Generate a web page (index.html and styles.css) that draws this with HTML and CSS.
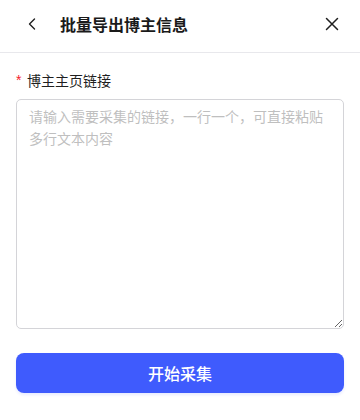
FILE: index.html
```html
<!DOCTYPE html>
<html lang="zh-CN">
<head>
<meta charset="utf-8">
<title>批量导出博主信息</title>
<link rel="stylesheet" href="styles.css">
</head>
<body>
<div class="panel">
  <header class="header">
    <button class="icon-btn back" aria-label="返回">
      <svg width="16" height="16" viewBox="0 0 16 16"><path d="M10.5 3 L5.5 8 L10.5 13" fill="none" stroke="#1f1f1f" stroke-width="1.4" stroke-linecap="round" stroke-linejoin="round"/></svg>
    </button>
    <h1 class="title">批量导出博主信息</h1>
    <button class="icon-btn close" aria-label="关闭">
      <svg width="16" height="16" viewBox="0 0 16 16"><path d="M2.5 2.5 L13.5 13.5 M13.5 2.5 L2.5 13.5" fill="none" stroke="#1f1f1f" stroke-width="1.5" stroke-linecap="round"/></svg>
    </button>
  </header>
  <main class="body">
    <label class="label" for="links"><span class="req">*</span>博主主页链接</label>
    <textarea id="links" class="input" placeholder="请输入需要采集的链接，一行一个，可直接粘贴多行文本内容"></textarea>
    <button class="primary">开始采集</button>
  </main>
</div>
</body>
</html>
```
FILE: styles.css
```css
* { box-sizing: border-box; }
html, body { margin: 0; padding: 0; background: #fff; }
body {
  font-family: "Noto Sans CJK SC", "Noto Sans", sans-serif;
  color: #1f1f1f;
  width: 360px;
  height: 420px;
}
.panel { width: 360px; }
.header {
  height: 53px;
  display: flex;
  align-items: center;
  padding: 0 16px 4px 22px;
  border-bottom: 1px solid #e8e8ec;
}
.icon-btn {
  border: 0;
  background: none;
  padding: 0;
  width: 20px;
  height: 20px;
  display: flex;
  align-items: center;
  justify-content: center;
  cursor: pointer;
}
.back { margin-right: 18px; }
.close { margin-left: auto; margin-right: 2px; }
.title {
  margin: 0;
  font-size: 16px;
  font-weight: 700;
  line-height: 24px;
  color: #1a1a1a;
}
.body {
  padding: 16px 16px 0;
  display: flex;
  flex-direction: column;
}
.label {
  font-size: 14px;
  line-height: 22px;
  color: #1f1f1f;
  display: flex;
  align-items: center;
  margin-bottom: 8px;
}
.req {
  color: #f5222d;
  margin-right: 4px;
  font-size: 14px;
  width: 7px;
  font-family: "Liberation Sans", sans-serif;
}
.input {
  width: 328px;
  height: 230px;
  border: 1px solid #d4d4d8;
  border-radius: 5px;
  padding: 5px 12px;
  font-family: "Noto Sans CJK SC", "Noto Sans", sans-serif;
  font-size: 14px;
  line-height: 22px;
  color: #1f1f1f;
  resize: vertical;
  outline: none;
}
.input::placeholder { color: #bfbfbf; }
.primary {
  margin-top: 24px;
  height: 40px;
  width: 328px;
  border: 0;
  border-radius: 8px;
  background: #3f5bfd;
  color: #fff;
  font-family: "Noto Sans CJK SC", "Noto Sans", sans-serif;
  font-size: 16px;
  font-weight: 500;
  cursor: pointer;
  box-shadow: 0 2px 3px rgba(63, 91, 253, 0.12);
}
```
